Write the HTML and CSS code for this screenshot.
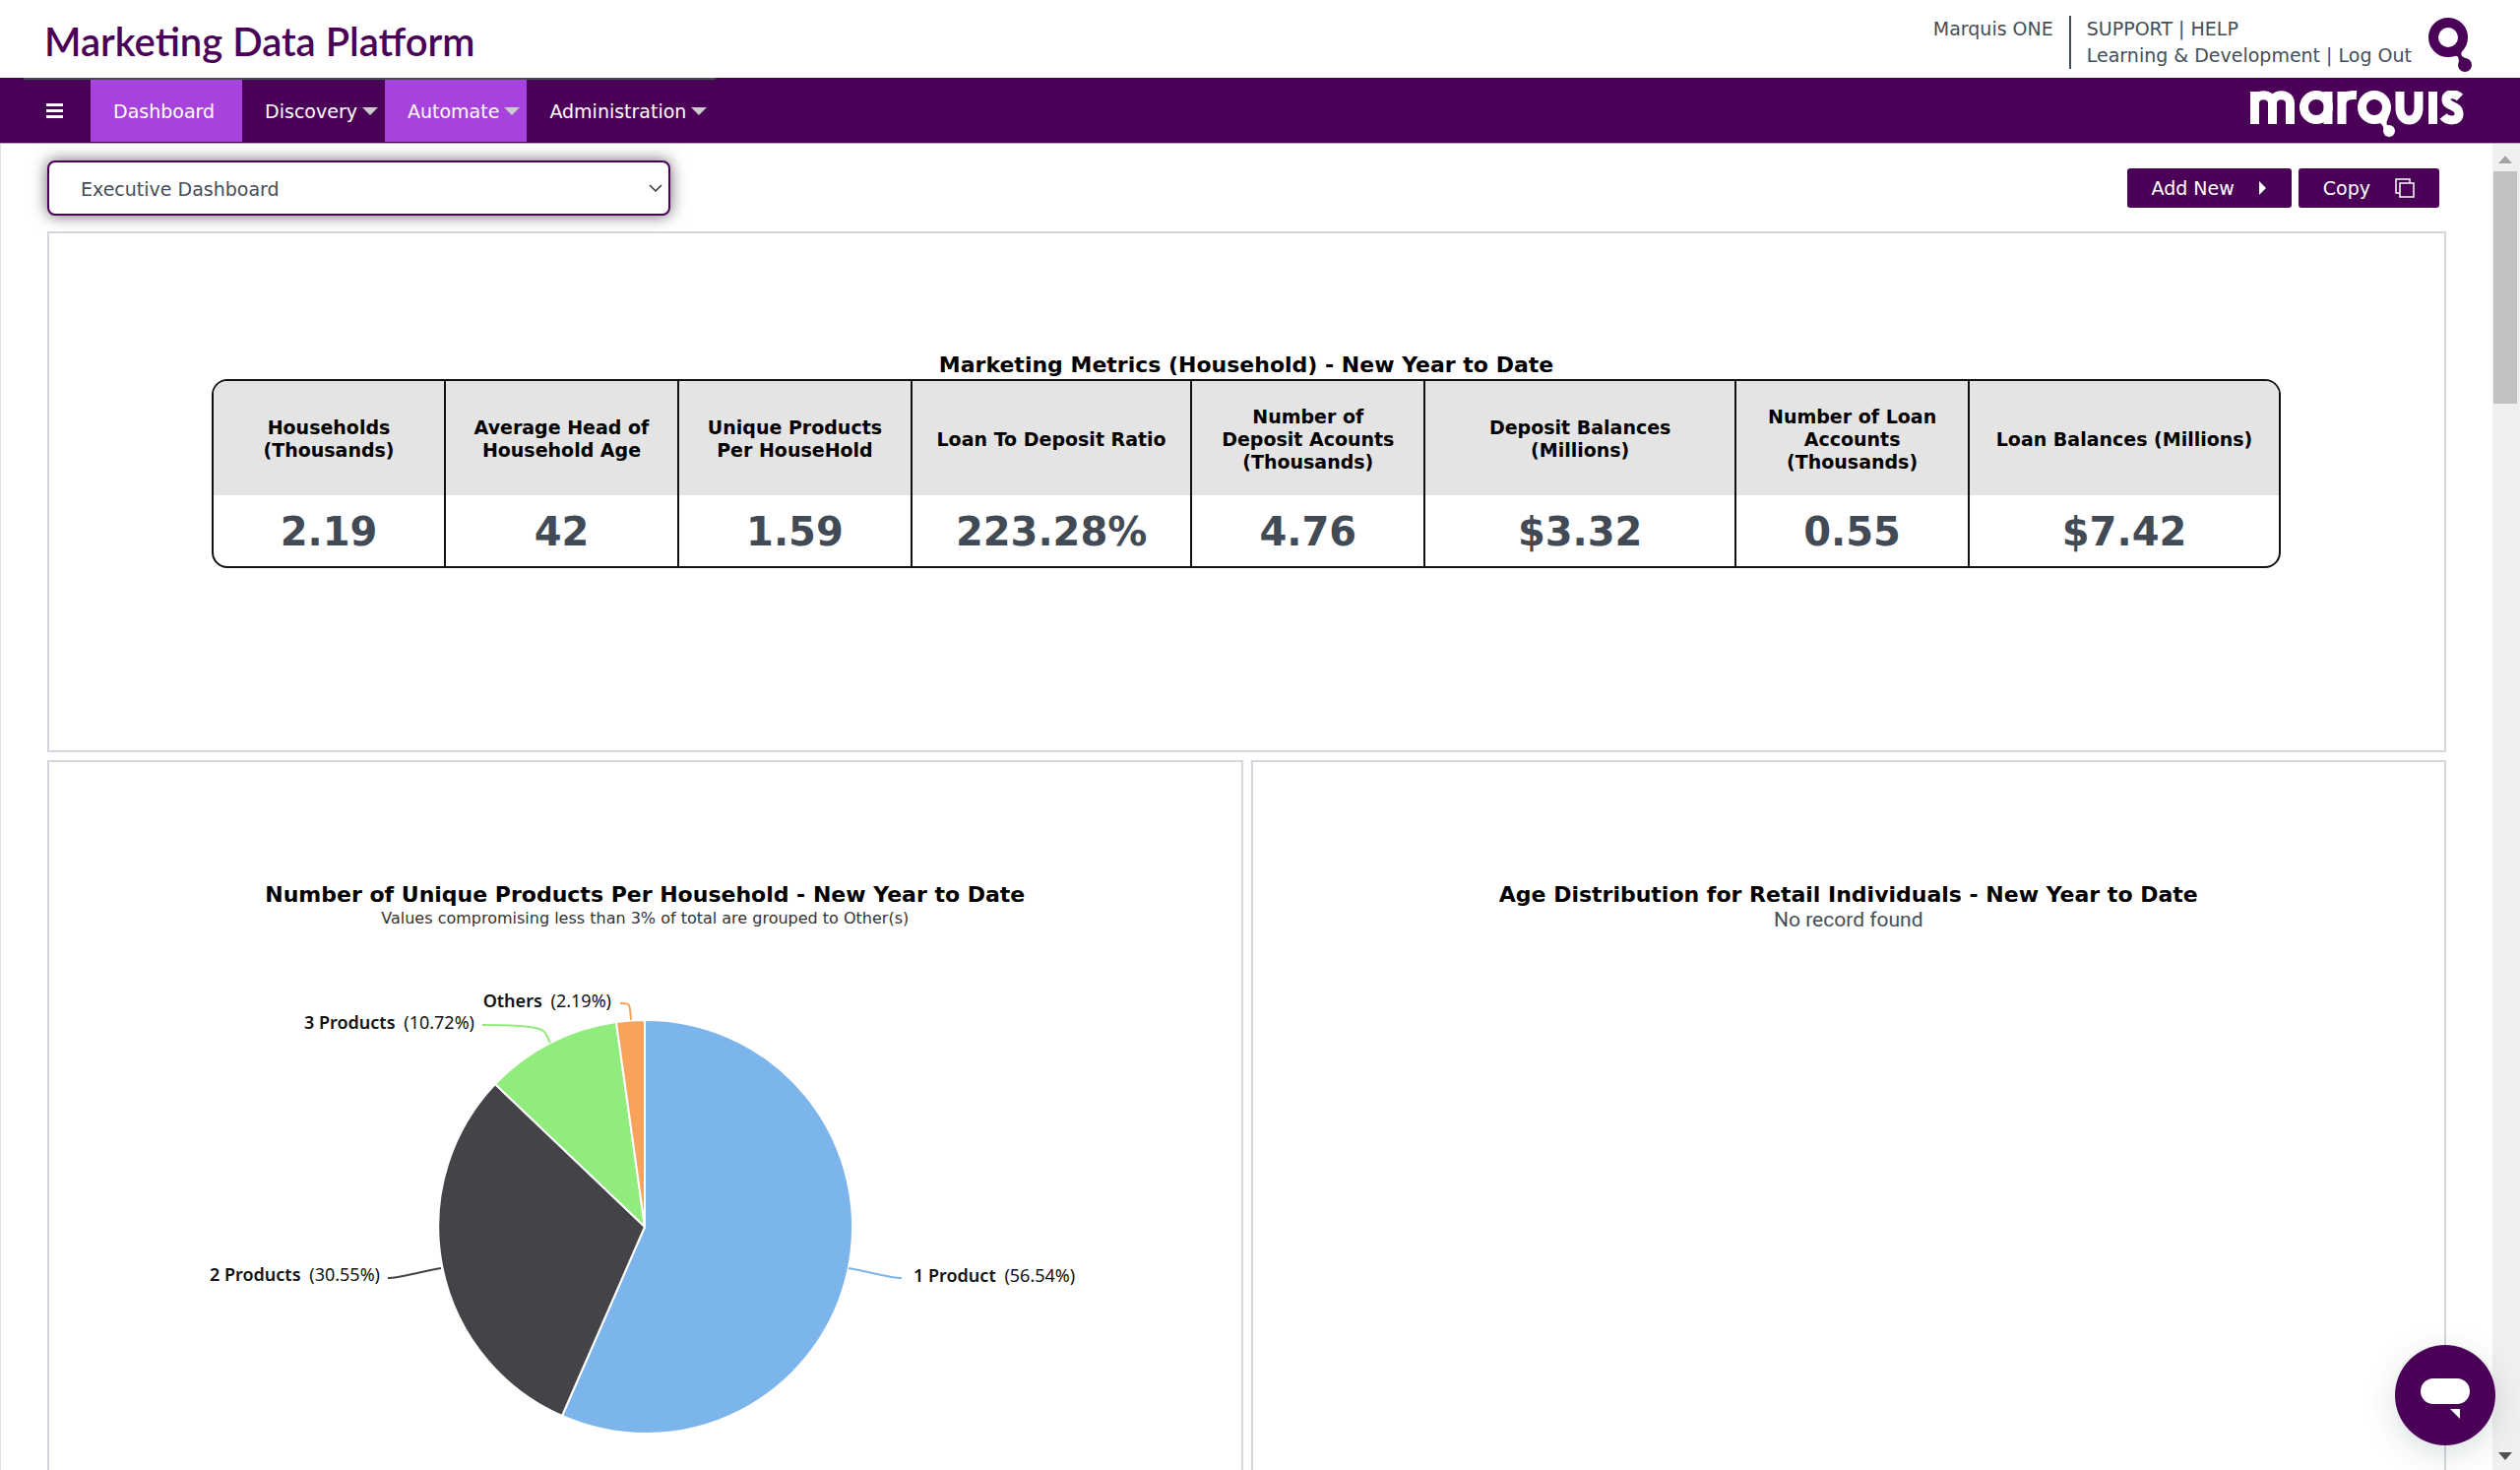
FILE: index.html
```html
<!DOCTYPE html>
<html lang="en">
<head>
    <meta charset="UTF-8">
    <meta name="viewport" content="width=device-width, initial-scale=1.0">
    <title>Marketing Data Platform</title>
    <link rel="stylesheet" href="styles.css">
</head>
<body>
    <header class="top-bar">
        <h1 class="site-title">Marketing Data Platform</h1>
        <div class="account">
            <span class="account-name">Marquis ONE</span>
            <div class="account-links">
                <div><a href="#">SUPPORT</a> | <a href="#">HELP</a></div>
                <div><a href="#">Learning &amp; Development</a> | <a href="#">Log Out</a></div>
            </div>
            <svg class="q-logo" viewBox="0 0 44 55" width="44" height="55">
                <circle cx="20" cy="20" r="15" fill="none" stroke="#4b0058" stroke-width="10"/>
                <path d="M25 39 C30 37 31 41 31 46 L38 41 C33 40 32 37 35 31 Z" fill="#4b0058"/>
                <circle cx="37" cy="48" r="7" fill="#4b0058"/>
            </svg>
        </div>
    </header>

    <nav class="nav-bar">
        <button type="button" class="menu-btn" aria-label="Menu"><span></span><span></span><span></span></button>
        <a href="#" class="nav-item active">Dashboard</a>
        <a href="#" class="nav-item has-menu">Discovery</a>
        <a href="#" class="nav-item has-menu active">Automate</a>
        <a href="#" class="nav-item has-menu">Administration</a>
        <svg class="marquis-logo" viewBox="0 0 218 48" width="218" height="48" role="img" aria-label="marquis">
            <g fill="none" stroke="#fff" stroke-width="9">
                <path d="M4.500 34V1M4.500 34V13C4.500 2 22.500 2 22.500 13V34M22.500 13C22.500 2 40.500 2 40.500 13V34"/>
                <circle cx="67" cy="17" r="12.500"/>
                <path d="M79 1V34M93 34V1M93 14C93 7 98 4 108 4.500"/>
                <circle cx="126" cy="17" r="12.500"/>
                <path d="M152 1V18C152 34 171 34 171 18V1M185.500 1V34"/>
                <path d="M213 7C209 3 199 2 199 9C199 17 212 14 212 24C212 32 200 31 196 26"/>
            </g>
            <path d="M130 33C134 33 135 36 136 41L142 37C137 35 138 32 141 26Z" fill="#fff"/>
            <circle cx="141" cy="41" r="6" fill="#fff"/>
        </svg>
    </nav>

    <div class="page">
        <main class="content">
            <div class="toolbar">
                <select class="dashboard-select" aria-label="Dashboard">
                    <option>Executive Dashboard</option>
                </select>
                <div class="actions">
                    <button type="button" class="action-btn">Add New
                        <svg width="8" height="14" viewBox="0 0 8 14"><path d="M0 0L7 7L0 14Z" fill="#fff"/></svg>
                    </button>
                    <button type="button" class="action-btn">Copy
                        <svg width="20" height="20" viewBox="0 0 20 20" fill="none" stroke="#fff" stroke-width="1.500">
                            <path d="M5 15H1V1H15V5"/>
                            <rect x="5" y="5" width="14" height="14"/>
                        </svg>
                    </button>
                </div>
            </div>

            <section class="panel metrics-panel">
                <h2>Marketing Metrics (Household) - New Year to Date</h2>
                <table class="metrics">
                    <colgroup>
                        <col class="col-first"><col class="col-sm"><col class="col-sm"><col class="col-md">
                        <col class="col-sm"><col class="col-lg"><col class="col-sm"><col class="col-lg">
                    </colgroup>
                    <thead>
                        <tr>
                            <th>Households (Thousands)</th>
                            <th>Average Head of Household Age</th>
                            <th>Unique Products Per HouseHold</th>
                            <th>Loan To Deposit Ratio</th>
                            <th>Number of Deposit Acounts (Thousands)</th>
                            <th>Deposit Balances (Millions)</th>
                            <th>Number of Loan Accounts (Thousands)</th>
                            <th>Loan Balances (Millions)</th>
                        </tr>
                    </thead>
                    <tbody>
                        <tr>
                            <td>2.19</td>
                            <td>42</td>
                            <td>1.59</td>
                            <td>223.28%</td>
                            <td>4.76</td>
                            <td>$3.32</td>
                            <td>0.55</td>
                            <td>$7.42</td>
                        </tr>
                    </tbody>
                </table>
            </section>

            <div class="charts">
                <section class="panel chart-panel">
                    <h2>Number of Unique Products Per Household - New Year to Date</h2>
                    <p class="subtitle">Values compromising less than 3% of total are grouped to Other(s)</p>
                    <svg class="pie" viewBox="0 0 900 470" width="900" height="470">
                        <g stroke="#fff" stroke-width="2" stroke-linejoin="round">
                            <path d="M450 250V40A210 210 0 1 1 366 442Z" fill="#7cb5ec"/>
                            <path d="M450 250L366 442A210 210 0 0 1 298 105Z" fill="#434348"/>
                            <path d="M450 250L298 105A210 210 0 0 1 421 42Z" fill="#90ed7d"/>
                            <path d="M450 250L421 42A210 210 0 0 1 450 40Z" fill="#f7a35c"/>
                        </g>
                        <g fill="none" stroke-width="2">
                            <path d="M711 302C700 302 684 297 657 292" stroke="#7cb5ec"/>
                            <path d="M189 302C200 302 216 297 243 292" stroke="#434348"/>
                            <path d="M285 45C340 45 346 49 349 53L354 63" stroke="#90ed7d"/>
                            <path d="M425 23C435 23 434 24 435 29L436 40" stroke="#f7a35c"/>
                        </g>
                        <g class="pie-labels">
                            <text x="723" y="306"><tspan class="name">1 Product</tspan> <tspan dx="4">(56.54%)</tspan></text>
                            <text x="181" y="305" text-anchor="end"><tspan class="name">2 Products</tspan> <tspan dx="4">(30.55%)</tspan></text>
                            <text x="277" y="49" text-anchor="end"><tspan class="name">3 Products</tspan> <tspan dx="4">(10.72%)</tspan></text>
                            <text x="416" y="27" text-anchor="end"><tspan class="name">Others</tspan> <tspan dx="4">(2.19%)</tspan></text>
                        </g>
                    </svg>
                </section>
                <section class="panel chart-panel">
                    <h2>Age Distribution for Retail Individuals - New Year to Date</h2>
                    <p class="no-record">No record found</p>
                </section>
            </div>
        </main>

        <div class="scrollbar">
            <svg width="14" height="8" viewBox="0 0 14 8"><path d="M0 8L7 0L14 8Z" fill="#a3a3a3"/></svg>
            <div class="thumb"></div>
            <svg class="down" width="14" height="8" viewBox="0 0 14 8"><path d="M0 0L7 8L14 0Z" fill="#505050"/></svg>
        </div>
    </div>

    <button type="button" class="chat-btn" aria-label="Open chat">
        <svg width="52" height="44" viewBox="0 0 52 44" fill="#fff">
            <rect x="1" y="1" width="50" height="26" rx="13"/>
            <path d="M31 32H41V42Z"/>
        </svg>
    </button>
</body>
</html>
```
FILE: styles.css
```css
* {
    box-sizing: border-box;
}
body {
    margin: 0;
    height: 100vh;
    display: flex;
    flex-direction: column;
    overflow: hidden;
    font-family: Verdana, "DejaVu Sans", sans-serif;
    font-size: 19px;
    color: #444e59;
    background: white;
}
a {
    color: inherit;
    text-decoration: none;
}
h1, h2, p {
    margin: 0;
}
button, select {
    font: inherit;
}

/* header */
.top-bar {
    height: 79px;
    flex: none;
    display: flex;
    justify-content: space-between;
    padding: 0 49px 0 45px;
}
.site-title {
    font-family: Lato, sans-serif;
    font-size: 40px;
    font-weight: 600;
    line-height: 84px;
    color: #4b0058;
}
.account {
    display: flex;
    align-items: flex-start;
    padding-top: 16px;
    line-height: 27px;
}
.account-name {
    padding-right: 16px;
}
.account-links {
    border-left: 2px solid #444e59;
    padding-left: 16px;
    margin-right: 17px;
}
.q-logo {
    margin-top: 2px;
}

/* navigation */
.nav-bar {
    height: 67px;
    flex: none;
    display: flex;
    align-items: stretch;
    padding: 2px 56px 1px 45px;
    background: #4b0058 linear-gradient(#444e59, #444e59) no-repeat 24px 0 / 703px 2px;
    border-bottom: 1px solid #b9a5bd;
}
.menu-btn {
    width: 47px;
    display: flex;
    flex-direction: column;
    justify-content: center;
    gap: 3px;
    padding: 0 0 0 2px;
    border: none;
    background: none;
}
.menu-btn span {
    width: 17px;
    height: 3px;
    background: white;
}
.nav-item {
    display: flex;
    align-items: center;
    padding: 0 28px 0 23px;
    color: white;
}
.has-menu {
    padding-right: 7px;
}
.has-menu::after {
    content: "";
    margin-left: 5px;
    border: 8px solid transparent;
    border-top-color: #ccc;
    border-bottom: none;
}
.nav-item.active {
    background: #a742dc;
}
.marquis-logo {
    margin: 11px 0 0 auto;
}

/* page body */
.page {
    flex: 1;
    min-height: 0;
    display: flex;
    border-left: 1px solid #e3e3e6;
}
.content {
    flex: 1;
    padding: 17px 47px 0;
    overflow: hidden;
}
.toolbar {
    display: flex;
    justify-content: space-between;
    align-items: flex-start;
    padding-right: 7px;
    margin-bottom: 16px;
}
.dashboard-select {
    width: 633px;
    height: 56px;
    padding: 2px 32px 0;
    border: 2px solid #4b0058;
    border-radius: 8px;
    color: #444e59;
    appearance: none;
    background: white url("data:image/svg+xml,%3Csvg xmlns='http://www.w3.org/2000/svg' width='14' height='9'%3E%3Cpath d='M1 1L7 7L13 1' fill='none' stroke='%23333' stroke-width='1.500'/%3E%3C/svg%3E") no-repeat right 6px center;
    box-shadow: 0 0 16px rgba(0, 0, 0, 0.6);
}
.actions {
    display: flex;
    gap: 7px;
    padding-top: 8px;
}
.action-btn {
    height: 40px;
    display: flex;
    align-items: center;
    gap: 25px;
    padding: 0 25px;
    border: none;
    border-radius: 3px;
    background: #4b0058;
    color: white;
}

.panel {
    border: 2px solid #d3d6dd;
    text-align: center;
}
.panel h2 {
    font-size: 22px;
    line-height: 28px;
    color: black;
}
.metrics-panel {
    height: 529px;
    padding: 120px 166px 0 165px;
    margin-bottom: 8px;
}
.metrics {
    width: 100%;
    table-layout: fixed;
    border-collapse: separate;
    border-spacing: 0;
    border: 2px solid #111;
    border-radius: 16px;
    overflow: hidden;
}
.col-first {
    width: 11.15%;
}
.col-sm {
    width: 11.29%;
}
.col-md {
    width: 13.55%;
}
.col-lg {
    width: 15.05%;
}
.metrics th {
    height: 116px;
    padding: 2px 24px 0;
    background: #e4e4e4;
    color: black;
    font-size: 19px;
    line-height: 23px;
}
.metrics td {
    height: 72px;
    padding: 2px 0 0;
    font-size: 40px;
    line-height: 48px;
    font-weight: bold;
    color: #414a55;
}
.metrics th + th,
.metrics td + td {
    border-left: 2px solid #111;
}

.charts {
    display: grid;
    grid-template-columns: 1fr 1fr;
    gap: 8px;
}
.chart-panel {
    height: 760px;
    padding-top: 121px;
}
.subtitle {
    font-size: 16px;
    line-height: 20px;
    color: #333;
}
.no-record {
    font-family: Roboto, sans-serif;
    font-size: 21px;
    line-height: 22px;
}
.pie {
    display: block;
    margin: 53px auto 0;
}
.pie-labels {
    font-family: "Noto Sans", sans-serif;
    font-size: 18px;
    fill: #111;
}
.pie-labels .name {
    font-weight: 600;
}

/* scrollbar */
.scrollbar {
    width: 28px;
    flex: none;
    display: flex;
    flex-direction: column;
    align-items: center;
    padding: 12px 3px 10px 1px;
    background: #f0f0f0;
}
.thumb {
    width: 24px;
    height: 236px;
    margin-top: 8px;
    background: #c1c1c1;
}
.scrollbar .down {
    margin-top: auto;
}

.chat-btn {
    position: fixed;
    right: 25px;
    bottom: 25px;
    width: 102px;
    height: 102px;
    padding: 11px 0 0;
    border: none;
    border-radius: 50%;
    background: #4b0058;
    box-shadow: 0 8px 32px rgba(9, 50, 50, 0.15);
}
```
